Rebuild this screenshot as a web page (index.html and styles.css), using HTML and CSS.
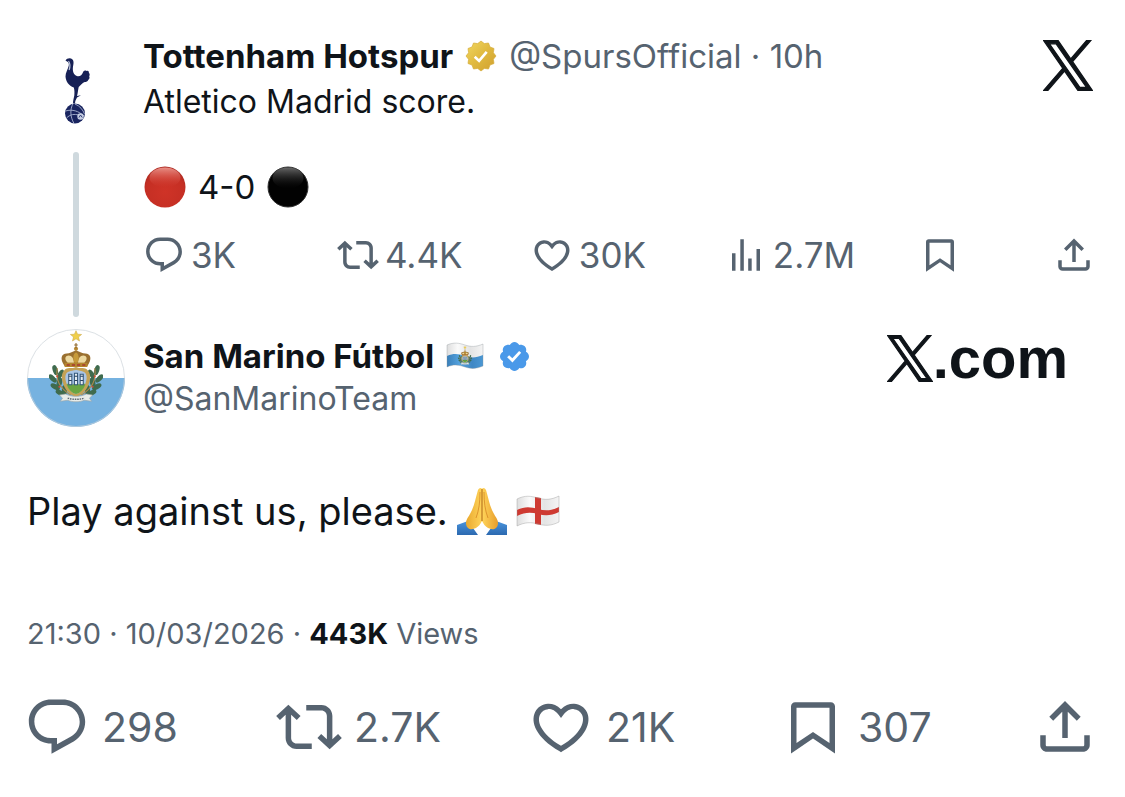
FILE: index.html
```html
<!DOCTYPE html>
<html lang="en">
<head>
<meta charset="utf-8">
<meta name="viewport" content="width=device-width, initial-scale=1">
<title>San Marino Fútbol on X</title>
<link rel="stylesheet" href="styles.css">
</head>
<body>
<svg class="defs" aria-hidden="true">
  <defs>
    <symbol id="i-reply" viewBox="0 0 24 24"><path d="M1.751 10c0-4.42 3.584-8 8.005-8h4.366c4.49 0 8.129 3.64 8.129 8.13 0 2.96-1.607 5.68-4.196 7.11l-8.054 4.46v-3.69h-.067c-4.49.1-8.183-3.51-8.183-8.01zm8.005-6c-3.317 0-6.005 2.69-6.005 6 0 3.37 2.77 6.08 6.138 6.01l.351-.01h1.761v2.3l5.087-2.81c1.951-1.08 3.163-3.13 3.163-5.36 0-3.39-2.744-6.13-6.129-6.13H9.756z"/></symbol>
    <symbol id="i-repost" viewBox="0 0 24 24"><path d="M4.5 3.88l4.432 4.14-1.364 1.46L5.5 7.55V16c0 1.1.896 2 2 2H13v2H7.5c-2.209 0-4-1.79-4-4V7.55L1.432 9.48.068 8.02 4.5 3.88zM16.5 6H11V4h5.5c2.209 0 4 1.79 4 4v8.45l2.068-1.93 1.364 1.46-4.432 4.14-4.432-4.14 1.364-1.46 2.068 1.93V8c0-1.1-.896-2-2-2z"/></symbol>
    <symbol id="i-like" viewBox="0 0 24 24"><path d="M16.697 5.5c-1.222-.06-2.679.51-3.89 2.16l-.805 1.09-.806-1.09C9.984 6.01 8.526 5.44 7.304 5.5c-1.243.07-2.349.78-2.91 1.91-.552 1.12-.633 2.78.479 4.82 1.074 1.97 3.257 4.27 7.129 6.61 3.87-2.34 6.052-4.64 7.126-6.61 1.111-2.04 1.03-3.7.477-4.82-.561-1.13-1.666-1.84-2.908-1.91zm4.187 7.69c-1.351 2.48-4.001 5.12-8.379 7.67l-.503.3-.504-.3c-4.379-2.55-7.029-5.19-8.382-7.67-1.36-2.5-1.41-4.86-.514-6.67.887-1.79 2.647-2.91 4.601-3.01 1.651-.09 3.368.56 4.798 2.01 1.429-1.45 3.146-2.1 4.796-2.01 1.954.1 3.714 1.22 4.601 3.01.896 1.81.846 4.17-.514 6.67z"/></symbol>
    <symbol id="i-views" viewBox="0 0 24 24"><path d="M8.750 21V3h2v18h-2zM18 21V8.500h2V21h-2zM4 21V11h2v10H4zm9.250 0v-7h2v7h-2z"/></symbol>
    <symbol id="i-save" viewBox="0 0 24 24"><path d="M4 4.500C4 3.670 4.670 3 5.500 3h13c.83 0 1.500.67 1.500 1.500v17.100l-8-5.400-8 5.400V4.500zM6 5v12.850l6-4.050 6 4.050V5H6z"/></symbol>
    <symbol id="i-share" viewBox="0 0 24 24"><path d="M12 2.590l5.700 5.700-1.410 1.420L13 6.410V16h-2V6.410l-3.300 3.300-1.410-1.420L12 2.590zM21 15v3.500c0 1.380-1.120 2.500-2.500 2.500h-13C4.120 21 3 19.880 3 18.500V15h2v3.500c0 .28.22.5.5.5h13c.28 0 .5-.22.5-.5V15h2z"/></symbol>
    <symbol id="i-x" viewBox="-15 -15 1230 1257"><path stroke="#0f1419" stroke-width="30" d="M714.163 519.284L1160.89 0H1055.03L667.137 450.887L357.328 0H0L468.492 681.821L0 1226.37H105.866L515.491 750.218L842.672 1226.37H1200L714.137 519.284ZM569.165 687.828L521.697 619.934L144.011 79.6944H306.615L611.412 515.685L658.88 583.579L1055.08 1150.3H892.476L569.165 687.854Z"/></symbol>
    <symbol id="arms" viewBox="0 0 52 70">
      <path d="M26 0l1.500 3.400 3.900.3-3 2.400 1 3.900-3.400-2.100-3.400 2.100 1-3.900-3-2.400 3.900-.3z" fill="#f0cf4a" stroke="#c9a43c" stroke-width=".5"/>
      <g fill="#3f6b4e">
        <ellipse cx="6" cy="38" rx="2.4" ry="5" transform="rotate(-18 6 38)"/><ellipse cx="3.5" cy="46" rx="2.4" ry="5" transform="rotate(-45 3.5 46)"/><ellipse cx="6" cy="54" rx="2.4" ry="5" transform="rotate(-60 6 54)"/><ellipse cx="11" cy="60" rx="2.4" ry="5" transform="rotate(-65 11 60)"/><ellipse cx="11" cy="42" rx="2.4" ry="5" transform="rotate(30 11 42)"/><ellipse cx="10" cy="50" rx="2.6" ry="5" transform="rotate(15 10 50)"/><ellipse cx="15" cy="57" rx="2.6" ry="5"/>
        <ellipse cx="46" cy="38" rx="2.4" ry="5" transform="rotate(18 46 38)"/><ellipse cx="48.5" cy="46" rx="2.4" ry="5" transform="rotate(45 48.5 46)"/><ellipse cx="46" cy="54" rx="2.4" ry="5" transform="rotate(60 46 54)"/><ellipse cx="41" cy="60" rx="2.4" ry="5" transform="rotate(65 41 60)"/><ellipse cx="41" cy="42" rx="2.4" ry="5" transform="rotate(-30 41 42)"/><ellipse cx="42" cy="50" rx="2.6" ry="5" transform="rotate(-15 42 50)"/><ellipse cx="37" cy="57" rx="2.6" ry="5"/>
      </g>
      <path d="M8 36c-2 11 3 20 13 26M44 36c2 11-3 20-13 26" fill="none" stroke="#b08a4a" stroke-width="1"/>
      <g fill="#c84a3a"><circle cx="8" cy="44" r="1"/><circle cx="44" cy="44" r="1"/><circle cx="10" cy="54" r="1"/><circle cx="42" cy="54" r="1"/></g>
      <path d="M15 34c-5-7-3-12 2-12 3 0 5-2 9-3 4 1 6 3 9 3 5 0 7 5 2 12z" fill="#9a7030"/>
      <path d="M18 31c-4-4-2-7 1-7s5 3 5 7M34 31c4-4 2-7-1-7s-5 3-5 7" fill="#ecd9a0"/>
      <path d="M24.500 31c-2-5-1-9 1.500-10 2.500 1 3.500 5 1.500 10z" fill="#c69a3a"/>
      <circle cx="26" cy="17.5" r="2" fill="#b88a35"/><path d="M26 12v5M24.300 13.800h3.400" stroke="#8d6526" stroke-width="1"/>
      <path d="M15 31h22v4H15z" fill="#b5852d"/><path d="M17 33h3m2 0h3m2 0h3m2 0h3" stroke="#a63832" stroke-width="1.4"/>
      <path d="M16 37c3-2 6 0 10-2 4 2 7 0 10 2 5 4 4 10 2 15-2 6-7 10-12 12-5-2-10-6-12-12-2-5-3-11 2-15z" fill="#c4a255"/>
      <path d="M26 38c-5 1-9 1-10 5s1 9 3 12c2 4 4 5 7 6 3-1 5-2 7-6 2-3 4-8 3-12s-5-4-10-5z" fill="#a9c5e5"/>
      <path d="M17 52l3-3 3 3 3-3 3 3 3-3 3 3c-2 5-5 8-9 9-4-1-7-4-9-9z" fill="#69a642"/>
      <path d="M19 42h3v10h-3zm5.500-1h3v11h-3zM30 42h3v10h-3z" fill="#e6edf2" stroke="#35597b" stroke-width="1"/>
      <path d="M19 44h3m2.500 0h3m2.500 0h3M19 48h3m2.500 0h3m2.500 0h3" stroke="#2b4560" stroke-width="1"/>
      <path d="M10 62l6-1c6 3 14 3 20 0l6 1-3 3 2 3-7-1c-5 2-11 2-16 0l-7 1 2-3z" fill="#e8ece9" stroke="#9aa4a6" stroke-width=".6"/>
      <path d="M18 65c5 1.500 11 1.500 16 0" fill="none" stroke="#5f6870" stroke-width="1.4" stroke-dasharray="1.5 .8"/>
    </symbol>
    <radialGradient id="red" cx=".5" cy=".62" r=".62"><stop offset="0" stop-color="#cf3327"/><stop offset=".75" stop-color="#c52f24"/><stop offset="1" stop-color="#aa2a22"/></radialGradient>
    <linearGradient id="red-shine" x2="0" y2="1"><stop offset="0" stop-color="#ea9188"/><stop offset="1" stop-color="#d43c30" stop-opacity="0"/></linearGradient>
    <linearGradient id="black-shine" x2="0" y2="1"><stop offset="0" stop-color="#686868"/><stop offset="1" stop-color="#111" stop-opacity="0"/></linearGradient>
    <linearGradient id="gold" x2="1" y2="1"><stop offset="0" stop-color="#f1d860"/><stop offset=".5" stop-color="#e0b93f"/><stop offset="1" stop-color="#cf9f2e"/></linearGradient>
    <linearGradient id="cloth" x2="1" y2="0"><stop offset="0" stop-color="#dedede"/><stop offset=".3" stop-color="#fafafa"/><stop offset=".65" stop-color="#e4e4e4"/><stop offset="1" stop-color="#f4f4f4"/></linearGradient>
    <linearGradient id="sea" x2="1" y2="0"><stop offset="0" stop-color="#397fb9"/><stop offset=".35" stop-color="#55a3df"/><stop offset=".7" stop-color="#3f87c4"/><stop offset="1" stop-color="#4b98d4"/></linearGradient>
    <linearGradient id="skin" x2="1" y2="0"><stop offset="0" stop-color="#e9a82e"/><stop offset=".5" stop-color="#ffd45a"/><stop offset="1" stop-color="#e79d2b"/></linearGradient>
    <linearGradient id="sleeve" x2="0" y2="1"><stop offset="0" stop-color="#4a94dc"/><stop offset="1" stop-color="#2c69b0"/></linearGradient>
    <clipPath id="disc"><circle cx="49" cy="49" r="49"/></clipPath>
  </defs>
</svg>

<main class="page">
  <article class="quoted">
    <div class="rail">
      <svg class="avatar" viewBox="0 0 98 98" role="img" aria-label="Tottenham Hotspur crest">
        <circle cx="49" cy="49" r="49" fill="#fff"/>
        <path d="M38.500 18.500c1.500-2.500 5-3 7-1 1.800 2 .8 5 .4 8-.4 4 1 7.500 4 8.500 3 .8 5-1 6-3.500.6-1.800 2-2.500 3.500-1.500 1.500-.8 2.700.2 2.500 1.800 1.200 1.200.8 2.500.3 3.500.8 1.600 0 3-1 3.600-.5 1.500-2 2-3.500 2-2 .5-4 3-6 5-.6 2.500-.8 6-1.700 9l4-.6-4 2.100c-1 2-2 3.500-2 6h-2c0-3 .8-5 1.300-8 .3-3 .2-6-.5-8-5-2-8-6-8.300-11-.1-4 2.500-7 3.300-11 .3-2-.3-3-1-3.500z" fill="#172156"/>
        <path d="M41.500 19c1.500 2 2 5 .6 9" fill="none" stroke="#bcc5dd" stroke-width="1.2"/>
        <circle cx="48" cy="71.5" r="10" fill="#19245f"/>
        <g fill="none" stroke="#a9b4d3" stroke-width=".9"><path d="M38.500 69c7-2 13 0 18.500 5M46 61.500c-3 6-3 13 1 20M48 62c5 2 8 6 9.500 10M39.500 76c4-4 8-4 12-3"/></g>
        <circle cx="53.5" cy="74.5" r="3.2" fill="#c7cfe3"/><path d="M52 75.500l1.500-2.500 1.800 2.500" fill="none" stroke="#34407a"/>
      </svg>
      <span class="thread"></span>
    </div>
    <div class="content">
      <header class="byline">
        <span class="name">Tottenham Hotspur</span>
        <svg class="badge" viewBox="0 0 32 32" role="img" aria-label="Verified organisation"><path d="M16 1l3.300 2.600L23.500 3 25 7l4 1.500-.6 4.200L31 16l-2.600 3.300.6 4.200-4 1.500-1.500 4-4.200-.6L16 31l-3.300-2.600-4.200.6L7 25l-4-1.500.6-4.200L1 16l2.600-3.300L3 8.500 7 7l1.500-4 4.200.6z" fill="url(#gold)" stroke="#d5ac3a" stroke-width=".7" stroke-linejoin="round"/><path d="M9.700 16.700l4.400 4.200 7.600-9" fill="none" stroke="#fff" stroke-width="2.6"/></svg>
        <span class="muted">@SpursOfficial · 10h</span>
      </header>
      <p class="text">Atletico Madrid score.</p>
      <p class="score">
        <svg class="ball" viewBox="0 0 42 42" role="img" aria-label="Red circle"><circle cx="21" cy="21" r="20.5" fill="url(#red)"/><ellipse cx="21" cy="11.5" rx="15.5" ry="10" fill="url(#red-shine)"/></svg>
        <span>4-0</span>
        <svg class="ball" viewBox="0 0 42 42" role="img" aria-label="Black circle"><circle cx="21" cy="21" r="20" fill="#020202" stroke="#333"/><ellipse cx="21" cy="12" rx="15.5" ry="10.5" fill="url(#black-shine)"/></svg>
      </p>
      <div class="actions small">
        <button type="button" aria-label="3K replies"><svg><use href="#i-reply"/></svg>3K</button>
        <button type="button" aria-label="4.4K reposts"><svg><use href="#i-repost"/></svg>4.4K</button>
        <button type="button" aria-label="30K likes"><svg><use href="#i-like"/></svg>30K</button>
        <button type="button" aria-label="2.7M views"><svg><use href="#i-views"/></svg>2.7M</button>
        <button type="button" aria-label="Bookmark"><svg><use href="#i-save"/></svg></button>
        <button type="button" aria-label="Share"><svg><use href="#i-share"/></svg></button>
      </div>
    </div>
    <svg class="corner-logo" role="img" aria-label="X"><use href="#i-x"/></svg>
  </article>

  <article class="post">
    <header class="author">
      <svg class="avatar" viewBox="0 0 98 98" role="img" aria-label="San Marino flag">
        <g clip-path="url(#disc)"><path d="M0 0h98v49H0z" fill="#fff"/><path d="M0 49h98v49H0z" fill="#76b2e0"/></g>
        <circle cx="49" cy="49" r="48.5" fill="none" stroke="#ccd3d8" stroke-opacity=".7"/>
        <use href="#arms" x="22" y="1" width="54" height="74"/>
      </svg>
      <div class="who">
        <div class="byline">
          <span class="name">San Marino Fútbol</span>
          <svg class="flag" viewBox="0 0 38 28" role="img" aria-label="San Marino"><path d="M1 3c7-3 12-2 18 0s11 2 18-1v22c-7 3-12 3-18 1s-11-3-18 0z" fill="url(#cloth)"/><path d="M1 14c7-3 12-2 18 0s11 2 18-1v11c-7 3-12 3-18 1s-11-3-18 0z" fill="url(#sea)"/><path d="M1 3c7-3 12-2 18 0s11 2 18-1v22c-7 3-12 3-18 1s-11-3-18 0z" fill="none" stroke="#8c959b" stroke-opacity=".6" stroke-width=".6"/><use href="#arms" x="11" y="4" width="16" height="19"/></svg>
          <svg class="badge blue" viewBox="1.6 1.6 18.8 18.8" role="img" aria-label="Verified"><path fill="#4a99e9" d="M20.396 11c-.018-.646-.215-1.275-.57-1.816-.354-.54-.852-.972-1.438-1.246.223-.607.27-1.264.14-1.897-.131-.634-.437-1.218-.882-1.687-.47-.445-1.053-.75-1.687-.882-.633-.13-1.29-.083-1.897.14-.273-.587-.704-1.086-1.245-1.44S11.647 1.62 11 1.604c-.646.017-1.273.213-1.813.568s-.969.854-1.24 1.44c-.608-.223-1.267-.272-1.902-.14-.635.13-1.22.436-1.69.882-.445.47-.749 1.055-.878 1.688-.13.633-.08 1.29.144 1.896-.587.274-1.087.705-1.443 1.245-.356.54-.555 1.17-.574 1.817.02.647.218 1.276.574 1.817.356.54.856.972 1.443 1.245-.224.606-.274 1.263-.144 1.896.13.634.433 1.218.877 1.688.47.443 1.054.747 1.687.878.633.132 1.29.084 1.897-.136.274.586.705 1.084 1.246 1.439.54.354 1.17.551 1.816.569.647-.016 1.276-.213 1.817-.567s.972-.854 1.245-1.44c.604.239 1.266.296 1.903.164.636-.132 1.22-.447 1.68-.907.46-.46.776-1.044.908-1.681s.075-1.299-.165-1.903c.586-.274 1.084-.705 1.439-1.246.354-.54.551-1.17.569-1.816zM9.662 14.85l-3.429-3.428 1.293-1.302 2.072 2.072 4.4-4.794 1.347 1.246z"/></svg>
        </div>
        <div class="muted handle">@SanMarinoTeam</div>
      </div>
      <div class="wordmark"><svg role="img" aria-label="X"><use href="#i-x"/></svg><span>.com</span></div>
    </header>

    <p class="message">
      <span>Play against us, please.</span>
      <svg class="hands" viewBox="0 0 50 50" role="img" aria-label="Folded hands"><path d="M0 39l11-4 10 14H0zM50 39l-11-4-10 14h21z" fill="url(#sleeve)"/><path d="M21 4c1-2 3-3 4-1 1-2 3-1 4 1 2.500 8 3.500 16 7.500 23 2 4 5 7 4.500 11-1 6-6 6-10 4-3-2-4.500-4-6-7-1.500 3-3 5-6 7-4 2-9 2-10-4-.5-4 2.500-7 4.500-11 4-7 5-15 7.500-23z" fill="url(#skin)"/><path d="M25 3v32" stroke="#b97720" stroke-width="1.2"/><path d="M23 6c0 10-1 18-4 26M27 6c0 10 1 18 4 26" fill="none" stroke="#d98f28" stroke-width=".9"/></svg>
      <svg class="england" viewBox="0 0 44 33" role="img" aria-label="England"><path d="M1 4c8-4 14-3 21-1s13 2 21-2v26c-8 4-14 4-21 2s-13-2-21 2z" fill="url(#cloth)"/><path d="M19 2l6 1v27l-6-1z" fill="#ce3a32"/><path d="M1 15c8-4 14-3 21-1s13 2 21-2v5c-8 4-14 4-21 2s-13-2-21 2z" fill="#ce3a32"/><path d="M1 4c8-4 14-3 21-1s13 2 21-2v26c-8 4-14 4-21 2s-13-2-21 2z" fill="none" stroke="#999" stroke-opacity=".6" stroke-width=".7"/></svg>
    </p>

    <p class="meta"><time datetime="2026-03-10T21:30">21:30 · 10/03/2026</time> · <strong>443K</strong> Views</p>

    <div class="actions large">
      <button type="button" aria-label="298 replies"><svg><use href="#i-reply"/></svg>298</button>
      <button type="button" aria-label="2.7K reposts"><svg><use href="#i-repost"/></svg>2.7K</button>
      <button type="button" aria-label="21K likes"><svg><use href="#i-like"/></svg>21K</button>
      <button type="button" aria-label="307 bookmarks"><svg><use href="#i-save"/></svg>307</button>
      <button type="button" aria-label="Share"><svg><use href="#i-share"/></svg></button>
    </div>
  </article>
</main>
</body>
</html>
```
FILE: styles.css
```css
* { box-sizing: border-box; }

body {
  margin: 0;
  background: #fff;
  color: #0f1419;
  font-family: Inter, "Liberation Sans", sans-serif;
  font-size: 33px;
  line-height: 46px;
}

p { margin: 0; }
svg { display: block; flex: none; }
.defs { position: absolute; width: 0; height: 0; }

.page { padding: 33px 27px 36px; }
.muted { color: #566370; }
.text, .handle { font-size: 32px; }

.quoted {
  position: relative;
  display: grid;
  grid-template-columns: 98px 1fr;
  column-gap: 18px;
}

.content { padding-bottom: 39px; }

.rail {
  display: flex;
  flex-direction: column;
  align-items: center;
  gap: 12px;
  padding-top: 9px;
}

.avatar { width: 98px; height: 98px; }

.thread {
  flex: 1;
  width: 6px;
  border-radius: 3px;
  background: #cfd9de;
}

.byline {
  display: flex;
  align-items: center;
  gap: 12px;
  white-space: nowrap;
}

.name { font-weight: 700; }
.badge { width: 32px; height: 32px; }
.badge.blue { width: 29px; height: 29px; margin-left: 4px; }
.flag { width: 38px; height: 28px; }

.score {
  display: flex;
  align-items: center;
  gap: 12px;
  margin: 39px 0 22px;
  padding-left: 1px;
}

.ball { width: 42px; height: 42px; }

.actions {
  display: grid;
  align-items: center;
}

.actions button {
  display: flex;
  align-items: center;
  margin: 0;
  padding: 0;
  border: 0;
  background: none;
  color: #566370;
  font: inherit;
  cursor: pointer;
}

.actions svg { fill: currentColor; }

.small {
  grid-template-columns: repeat(4, 13fr) 9fr auto;
  margin-right: 3px;
  font-size: 35px;
}

.small button { gap: 6px; }
.small svg { width: 42px; height: 42px; }

.corner-logo {
  position: absolute;
  top: 7px;
  right: 5px;
  width: 50px;
  height: 51px;
  fill: #0f1419;
}

.post { padding-top: 12px; }

.author {
  display: flex;
  gap: 18px;
}

.who { padding-top: 4px; }
.handle { line-height: 40px; }

.wordmark {
  display: flex;
  align-items: center;
  align-self: flex-start;
  margin-left: auto;
  padding: 5px 30px 0 0;
  font: 700 58px/48px "Liberation Sans", Arial, sans-serif;
}

.wordmark svg { width: 46px; height: 47px; fill: #0f1419; }

.message {
  display: flex;
  align-items: center;
  gap: 9px;
  margin-top: 58px;
  font-size: 38px;
  line-height: 52px;
}

.hands { width: 50px; height: 50px; }
.england { width: 44px; height: 33px; }

.meta {
  margin-top: 74px;
  color: #566370;
  font-size: 29px;
  line-height: 46px;
}

.meta strong { color: #0f1419; }

.large {
  grid-template-columns: repeat(4, 1fr) auto;
  margin: 37px 0 0 -3px;
  font-size: 41px;
}

.large button { gap: 12px; }
.large svg { width: 66px; height: 66px; }
```
